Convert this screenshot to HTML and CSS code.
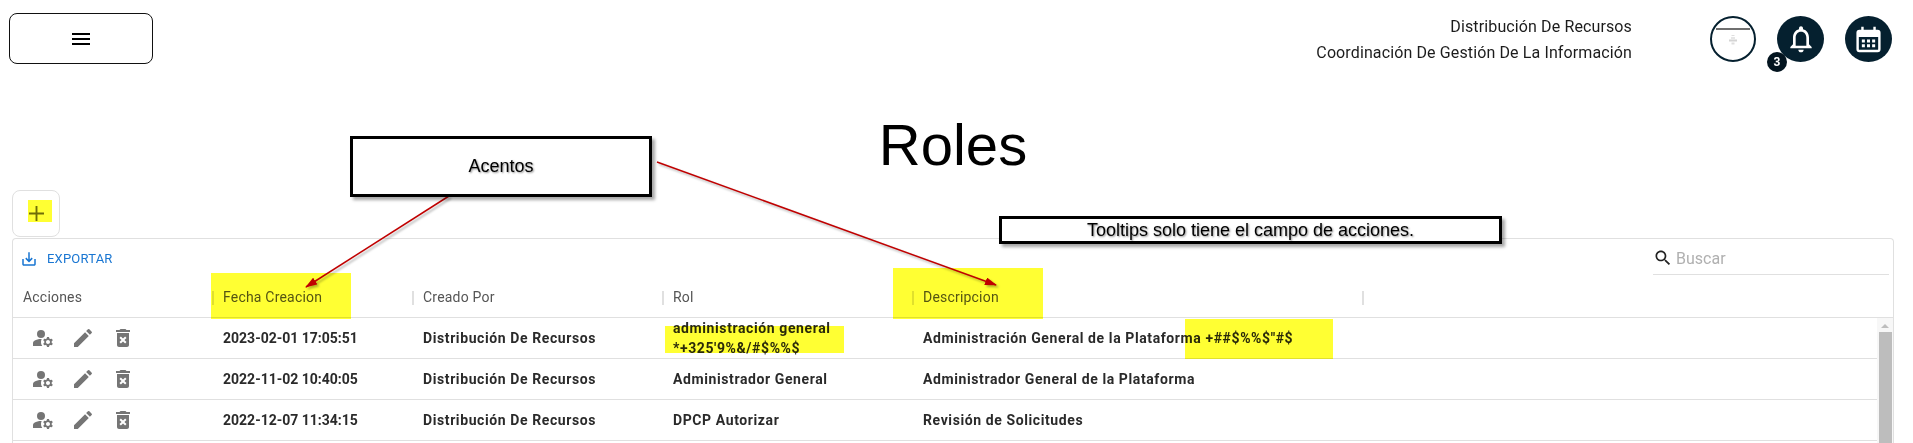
FILE: index.html
```html
<!DOCTYPE html>
<html>
<head>
  <title>Roles</title>
  <link rel="stylesheet" href="styles.css">
</head>
<body>
  <header class="topbar">
    <button class="menu-btn">
      <svg class="icon-menu" viewBox="0 0 24 24"><path d="M3 18h18v-2H3v2zm0-5h18v-2H3v2zm0-7v2h18V6H3z"/></svg>
    </button>
    <div class="topbar-right">
      <div class="user-info">
        <div>Distribución De Recursos</div>
        <div>Coordinación De Gestión De La Información</div>
      </div>
      <div class="round-icons">
        <div class="avatar">
          <svg viewBox="0 0 46 46">
            <circle cx="23" cy="23" r="22" fill="#fff" stroke="#05202f" stroke-width="2"/>
            <rect x="6" y="12.4" width="34" height="1.2" fill="#111"/>
            <rect x="21.500" y="19" width="3" height="1" fill="#dedede"/>
            <rect x="21" y="21" width="4" height="2" fill="#e6e6e6"/>
            <rect x="19" y="23.500" width="8" height="2" fill="#d4d4d4"/>
            <rect x="21.500" y="26.500" width="3" height="2" fill="#dedede"/>
          </svg>
        </div>
        <div class="round-btn">
          <svg class="icon-bell" viewBox="0 0 24 24"><path d="M12 22c1.1 0 2-.9 2-2h-4c0 1.1.9 2 2 2zm6-6v-5c0-3.07-1.64-5.64-4.5-6.32V4c0-.83-.67-1.5-1.5-1.5s-1.5.67-1.5 1.5v.68C7.63 5.36 6 7.92 6 11v5l-2 2v1h16v-1l-2-2zm-2 1H8v-6c0-2.48 1.51-4.5 4-4.5s4 2.02 4 4.5v6z"/></svg>
          <span class="badge">3</span>
        </div>
        <div class="round-btn">
          <svg class="icon-calendar" viewBox="0 0 24 24">
            <path d="M6 1.5h2V4h8V1.5h2V4h1.5A2.5 2.5 0 0 1 22 6.500V20a2.500 2.500 0 0 1-2.500 2.500h-15A2.500 2.500 0 0 1 2 20V6.500A2.500 2.500 0 0 1 4.500 4H6zM4 10v10a.5.5 0 0 0 .5.5h15a.5.5 0 0 0 .5-.5V10z"/>
            <path d="M6.500 12h2.500v2.500H6.500zM10.750 12h2.500v2.500h-2.500zM15 12h2.500v2.500H15zM6.500 16h2.500v2.500H6.500zM10.750 16h2.500v2.500h-2.500zM15 16h2.500v2.500H15z"/>
          </svg>
        </div>
      </div>
    </div>
  </header>

  <h1 class="page-title">Roles</h1>

  <button class="add-btn">
    <svg viewBox="0 0 16 16"><path d="M7 0h2v7h7v2H9v7H7V9H0V7h7z"/></svg>
  </button>

  <section class="grid-card">
    <div class="toolbar">
      <a class="export">
        <svg viewBox="0 0 24 24"><path d="M19 12v7H5v-7H3v7c0 1.100.9 2 2 2h14c1.100 0 2-.9 2-2v-7h-2zm-6 .67l2.590-2.580L17 11.500l-5 5-5-5 1.410-1.410L11 12.670V3h2z"/></svg>
        Exportar
      </a>
      <div class="search">
        <svg viewBox="0 0 24 24"><path d="M15.500 14h-.79l-.28-.27C15.410 12.590 16 11.110 16 9.500 16 5.910 13.090 3 9.500 3S3 5.910 3 9.500 5.910 16 9.500 16c1.610 0 3.090-.59 4.230-1.570l.27.28v.79l5 4.990L20.490 19l-4.990-5zm-6 0C7.010 14 5 11.990 5 9.500S7.010 5 9.500 5 14 7.010 14 9.500 11.990 14 9.500 14z"/></svg>
        <span>Buscar</span>
      </div>
    </div>

    <div class="row-grid head-row">
      <div class="head-cell">Acciones</div>
      <div class="head-cell sep">Fecha Creacion</div>
      <div class="head-cell sep">Creado Por</div>
      <div class="head-cell sep">Rol</div>
      <div class="head-cell sep sep-end">Descripcion</div>
    </div>

    <div class="grid-body">
      <div class="rows">
        <div class="row-grid body-row">
          <div class="actions">
            <svg viewBox="0 0 24 24"><circle cx="10" cy="8" r="4"/><path d="M10.670 13.020c-.22-.01-.44-.02-.67-.02-2.420 0-4.680.67-6.610 1.820-.88.52-1.390 1.500-1.390 2.530V20h9.260c-.79-1.130-1.260-2.510-1.260-4 0-1.070.25-2.070.67-2.980z"/><path d="M20.750 16c0-.22-.03-.42-.06-.63l1.140-1.010-1-1.730-1.450.49c-.32-.27-.68-.48-1.080-.63L18 11h-2l-.3 1.490c-.4.15-.76.36-1.080.63l-1.450-.49-1 1.730 1.140 1.010c-.03.21-.06.41-.06.63s.03.42.06.63l-1.140 1.010 1 1.730 1.450-.49c.32.27.68.48 1.080.63L16 21h2l.3-1.490c.4-.15.76-.36 1.080-.63l1.450.49 1-1.730-1.140-1.010c.03-.21.06-.41.06-.63zM17 18c-1.100 0-2-.9-2-2s.9-2 2-2 2 .9 2 2-.9 2-2 2z"/></svg>
            <svg viewBox="0 0 24 24"><path d="M3 17.250V21h3.750L17.810 9.940l-3.750-3.750L3 17.250zM20.710 7.040c.39-.39.39-1.020 0-1.410l-2.340-2.340a.9959.9959 0 0 0-1.410 0l-1.830 1.830 3.750 3.750 1.830-1.830z"/></svg>
            <svg viewBox="0 0 24 24"><path d="M6 19c0 1.100.9 2 2 2h8c1.100 0 2-.9 2-2V7H6v12zm2.460-7.120 1.410-1.410L12 12.590l2.120-2.120 1.410 1.410L13.410 14l2.120 2.120-1.410 1.410L12 15.410l-2.120 2.120-1.410-1.410L10.590 14l-2.130-2.120zM15.500 4l-1-1h-5l-1 1H5v2h14V4z"/></svg>
          </div>
          <div class="cell cell-date">2023-02-01 17:05:51</div>
          <div class="cell">Distribución De Recursos</div>
          <div class="cell">administración general *+325'9%&amp;/#$%%$</div>
          <div class="cell">Administración General de la Plataforma +##$%%$"#$</div>
        </div>
        <div class="row-grid body-row">
          <div class="actions">
            <svg viewBox="0 0 24 24"><circle cx="10" cy="8" r="4"/><path d="M10.670 13.020c-.22-.01-.44-.02-.67-.02-2.420 0-4.680.67-6.610 1.820-.88.52-1.390 1.500-1.390 2.530V20h9.260c-.79-1.130-1.260-2.510-1.260-4 0-1.070.25-2.070.67-2.980z"/><path d="M20.750 16c0-.22-.03-.42-.06-.63l1.140-1.010-1-1.730-1.450.49c-.32-.27-.68-.48-1.080-.63L18 11h-2l-.3 1.490c-.4.15-.76.36-1.080.63l-1.450-.49-1 1.730 1.140 1.010c-.03.21-.06.41-.06.63s.03.42.06.63l-1.140 1.010 1 1.730 1.450-.49c.32.27.68.48 1.080.63L16 21h2l.3-1.490c.4-.15.76-.36 1.080-.63l1.450.49 1-1.730-1.140-1.010c.03-.21.06-.41.06-.63zM17 18c-1.100 0-2-.9-2-2s.9-2 2-2 2 .9 2 2-.9 2-2 2z"/></svg>
            <svg viewBox="0 0 24 24"><path d="M3 17.250V21h3.750L17.810 9.940l-3.750-3.750L3 17.250zM20.710 7.040c.39-.39.39-1.020 0-1.410l-2.340-2.340a.9959.9959 0 0 0-1.410 0l-1.830 1.830 3.750 3.750 1.830-1.830z"/></svg>
            <svg viewBox="0 0 24 24"><path d="M6 19c0 1.100.9 2 2 2h8c1.100 0 2-.9 2-2V7H6v12zm2.460-7.120 1.410-1.410L12 12.590l2.120-2.120 1.410 1.410L13.410 14l2.120 2.120-1.410 1.410L12 15.410l-2.120 2.120-1.410-1.410L10.590 14l-2.130-2.120zM15.500 4l-1-1h-5l-1 1H5v2h14V4z"/></svg>
          </div>
          <div class="cell cell-date">2022-11-02 10:40:05</div>
          <div class="cell">Distribución De Recursos</div>
          <div class="cell">Administrador General</div>
          <div class="cell">Administrador General de la Plataforma</div>
        </div>
        <div class="row-grid body-row">
          <div class="actions">
            <svg viewBox="0 0 24 24"><circle cx="10" cy="8" r="4"/><path d="M10.670 13.020c-.22-.01-.44-.02-.67-.02-2.420 0-4.680.67-6.610 1.820-.88.52-1.390 1.500-1.390 2.530V20h9.260c-.79-1.130-1.260-2.510-1.260-4 0-1.070.25-2.070.67-2.980z"/><path d="M20.750 16c0-.22-.03-.42-.06-.63l1.140-1.010-1-1.730-1.450.49c-.32-.27-.68-.48-1.080-.63L18 11h-2l-.3 1.490c-.4.15-.76.36-1.080.63l-1.450-.49-1 1.730 1.140 1.010c-.03.21-.06.41-.06.63s.03.42.06.63l-1.140 1.010 1 1.730 1.450-.49c.32.27.68.48 1.080.63L16 21h2l.3-1.490c.4-.15.76-.36 1.080-.63l1.450.49 1-1.730-1.140-1.010c.03-.21.06-.41.06-.63zM17 18c-1.100 0-2-.9-2-2s.9-2 2-2 2 .9 2 2-.9 2-2 2z"/></svg>
            <svg viewBox="0 0 24 24"><path d="M3 17.250V21h3.750L17.810 9.940l-3.750-3.750L3 17.250zM20.710 7.040c.39-.39.39-1.020 0-1.410l-2.340-2.340a.9959.9959 0 0 0-1.410 0l-1.830 1.830 3.750 3.750 1.830-1.830z"/></svg>
            <svg viewBox="0 0 24 24"><path d="M6 19c0 1.100.9 2 2 2h8c1.100 0 2-.9 2-2V7H6v12zm2.460-7.120 1.410-1.410L12 12.590l2.120-2.120 1.410 1.410L13.410 14l2.120 2.120-1.410 1.410L12 15.410l-2.120 2.120-1.410-1.410L10.590 14l-2.130-2.120zM15.500 4l-1-1h-5l-1 1H5v2h14V4z"/></svg>
          </div>
          <div class="cell cell-date">2022-12-07 11:34:15</div>
          <div class="cell">Distribución De Recursos</div>
          <div class="cell">DPCP Autorizar</div>
          <div class="cell">Revisión de Solicitudes</div>
        </div>
      </div>
      <div class="scrollbar">
        <div class="scroll-arrow"></div>
        <div class="scroll-thumb"></div>
      </div>
    </div>
  </section>

  <!-- review marks drawn on top of the screen -->
  <div class="mark mark-plus"></div>
  <div class="mark mark-fecha"></div>
  <div class="mark mark-desc"></div>
  <div class="mark mark-rol"></div>
  <div class="mark mark-text"></div>

  <svg class="arrows" viewBox="0 0 1913 443">
    <defs>
      <marker id="head" markerWidth="12" markerHeight="8" refX="11" refY="4" orient="auto" markerUnits="userSpaceOnUse">
        <path d="M0 0L12 4L0 8z" fill="#c00000"/>
      </marker>
    </defs>
    <line x1="449" y1="196" x2="306" y2="287" stroke="#c00000" stroke-width="1.500" marker-end="url(#head)"/>
    <line x1="657" y1="162" x2="996" y2="285" stroke="#c00000" stroke-width="1.500" marker-end="url(#head)"/>
  </svg>

  <div class="note note-acentos">Acentos</div>
  <div class="note note-tooltips">Tooltips solo tiene el campo de acciones.</div>
</body>
</html>
```

FILE: styles.css
```css
html, body {
  height: 100%;
}

body {
  position: relative;
  margin: 0;
  overflow: hidden;
  background-color: #fff;
  font-family: Roboto, Arial, sans-serif;
  color: #222;
}

.topbar {
  display: flex;
  justify-content: space-between;
  align-items: flex-start;
  height: 51px;
  padding: 13px 21px 0 9px;
}

.menu-btn {
  display: flex;
  justify-content: center;
  align-items: center;
  width: 144px;
  height: 51px;
  padding: 0;
  background-color: #fff;
  border: 1px solid #111;
  border-radius: 8px;
}

.icon-menu {
  width: 24px;
  height: 24px;
  fill: #000;
}

.topbar-right {
  display: flex;
  align-items: flex-start;
}

.user-info {
  padding-top: 1px;
  margin-right: 78px;
  font-size: 16px;
  line-height: 26px;
  letter-spacing: 0.12px;
  text-align: right;
  color: #1c1c1c;
}

.round-icons {
  display: flex;
  gap: 21px;
  margin-top: 3px;
}

.avatar {
  width: 46px;
  height: 46px;
}

.avatar svg {
  display: block;
}

.round-btn {
  position: relative;
  display: flex;
  justify-content: center;
  align-items: center;
  width: 47px;
  height: 46px;
  background-color: #05202f;
  border-radius: 50%;
}

.icon-bell {
  width: 32px;
  height: 32px;
  fill: #fff;
}

.icon-calendar {
  width: 29px;
  height: 29px;
  fill: #fff;
}

.badge {
  position: absolute;
  left: -10px;
  top: 36px;
  width: 20px;
  height: 20px;
  background-color: #03141f;
  border-radius: 50%;
  font-size: 12px;
  font-weight: 700;
  line-height: 20px;
  text-align: center;
  color: #fff;
}

.page-title {
  margin: 52px 0 0;
  padding-right: 7px;
  font-family: "Liberation Sans", Arial, sans-serif;
  font-size: 58px;
  font-weight: 400;
  line-height: 58px;
  text-align: center;
  color: #000;
}

.add-btn {
  display: flex;
  justify-content: center;
  align-items: center;
  width: 48px;
  height: 47px;
  margin: 16px 0 0 12px;
  padding: 0;
  background-color: #fff;
  border: 1px solid #e0e0e0;
  border-radius: 8px;
}

.add-btn svg {
  width: 15px;
  height: 15px;
  fill: #6f6d24;
}

.grid-card {
  box-sizing: border-box;
  height: 205px;
  margin: 1px 19px 0 12px;
  overflow: hidden;
  border: 1px solid #e0e0e0;
  border-bottom: 0;
  border-radius: 4px 4px 0 0;
}

.toolbar {
  display: flex;
  justify-content: space-between;
  height: 37px;
  padding: 0 4px 0 7px;
}

.export {
  display: flex;
  align-items: center;
  gap: 9px;
  padding-top: 2px;
  font-size: 13px;
  letter-spacing: 0.2px;
  text-transform: uppercase;
  color: #1976d2;
}

.export svg {
  width: 18px;
  height: 18px;
  fill: #1976d2;
}

.search {
  display: flex;
  align-items: center;
  gap: 3px;
  box-sizing: border-box;
  width: 236px;
  height: 36px;
  padding-top: 3px;
  border-bottom: 1px solid #e0e0e0;
  font-size: 16px;
  color: #b0b0b0;
}

.search svg {
  width: 20px;
  height: 20px;
  fill: #222;
}

.row-grid {
  display: grid;
  grid-template-columns: 200px 200px 250px 250px 450px;
}

.head-row {
  height: 41px;
  border-bottom: 1px solid #e0e0e0;
}

.head-cell {
  position: relative;
  display: flex;
  align-items: center;
  padding-left: 10px;
  font-size: 14px;
  letter-spacing: 0.2px;
  color: #555;
}

.sep::before,
.sep-end::after {
  content: "";
  position: absolute;
  top: 15px;
  width: 2px;
  height: 14px;
  background-color: #e0e0e0;
}

.sep::before {
  left: -1px;
}

.sep-end::after {
  right: -1px;
}

.grid-body {
  display: flex;
  height: 130px;
}

.rows {
  flex: 1;
}

.body-row {
  height: 40px;
  border-bottom: 1px solid #e0e0e0;
}

.actions {
  display: flex;
  align-items: center;
  gap: 16px;
  padding-left: 18px;
}

.actions svg {
  width: 24px;
  height: 24px;
  fill: #757575;
}

.cell {
  display: flex;
  align-items: center;
  padding: 0 10px;
  font-size: 14px;
  font-weight: 700;
  line-height: 20px;
  letter-spacing: 0.6px;
  color: #2a2a2a;
}

.cell-date {
  letter-spacing: 0;
}

.scrollbar {
  width: 16px;
  background-color: #f7f7f7;
}

.scroll-arrow {
  width: 0;
  height: 0;
  margin: 6px auto 4px;
  border: 4px solid transparent;
  border-top: 0;
  border-bottom: 4px solid #bdbdbd;
}

.scroll-thumb {
  width: 13px;
  height: 116px;
  margin: 0 auto;
  background-color: #bdbdbd;
}

/* yellow highlighter */
.mark {
  position: absolute;
  background-color: #ffff33;
  mix-blend-mode: multiply;
}

.mark-plus {
  left: 28px;
  top: 200px;
  width: 24px;
  height: 22px;
}

.mark-fecha {
  left: 211px;
  top: 273px;
  width: 140px;
  height: 46px;
}

.mark-desc {
  left: 893px;
  top: 268px;
  width: 150px;
  height: 51px;
}

.mark-rol {
  left: 665px;
  top: 326px;
  width: 179px;
  height: 27px;
}

.mark-text {
  left: 1185px;
  top: 319px;
  width: 148px;
  height: 40px;
}

.arrows {
  position: absolute;
  left: 0;
  top: 0;
  width: 1913px;
  height: 443px;
  filter: drop-shadow(2px 2px 1px rgba(0, 0, 0, 0.3));
}

.note {
  position: absolute;
  display: flex;
  justify-content: center;
  align-items: center;
  box-sizing: border-box;
  background-color: #fff;
  border: 3px solid #000;
  box-shadow: 3px 3px 3px rgba(0, 0, 0, 0.35);
  font-family: "Liberation Sans", Arial, sans-serif;
  font-size: 18px;
  color: #000;
  text-shadow: 1px 1px 2px rgba(0, 0, 0, 0.45);
}

.note-acentos {
  left: 350px;
  top: 136px;
  width: 302px;
  height: 61px;
}

.note-tooltips {
  left: 999px;
  top: 216px;
  width: 503px;
  height: 28px;
}
```
